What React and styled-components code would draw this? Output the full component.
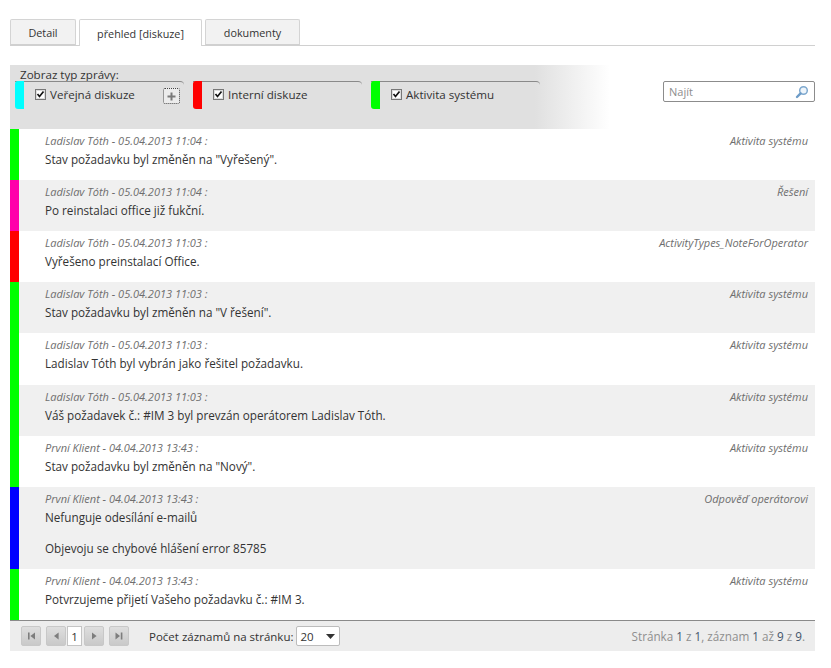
import React from 'react'
import styled, { createGlobalStyle } from 'styled-components'

const GlobalStyle = createGlobalStyle`
  html, body { margin: 0; padding: 0; background: #fff; }
  body { font-family: "Open Sans", "Noto Sans", "Liberation Sans", sans-serif; font-size: 11.5px; color: #333; }
`

const Page = styled.div`
  width: 805px;
  padding: 19px 16px 17px 10px;
`

const Tabs = styled.div`
  display: flex;
  gap: 3px;
  height: 26px;
  border-bottom: 1px solid #d0d0d0;
`

const Tab = styled.div`
  width: ${p => p.$w}px;
  box-sizing: border-box;
  height: ${p => (p.$active ? 27 : 26)}px;
  display: flex;
  align-items: center;
  justify-content: center;
  border: 1px solid #d4d4d4;
  border-bottom: ${p => (p.$active ? 'none' : '1px solid #d0d0d0')};
  border-radius: 2px 2px 0 0;
  background: ${p => (p.$active ? '#fff' : '#f2f2f2')};
  color: #333;
  font-size: 10.8px;
`

const Toolbar = styled.div`
  display: flex;
  justify-content: space-between;
  margin-top: 19px;
`

const FilterPanel = styled.div`
  width: 600px;
  height: 64px;
  box-sizing: border-box;
  padding: 3px 0 0 5px;
  background: linear-gradient(to right, #e0e0e0 0, #e0e0e0 525px, #ffffff 600px);
`

const FilterTitle = styled.div`
  padding-left: 5px;
  font-size: 11.6px;
  line-height: 13px;
  color: #333;
`

const FilterGroups = styled.div`
  display: flex;
  gap: 9px;
`

const FilterGroup = styled.div`
  width: 169px;
  height: 28px;
  box-sizing: border-box;
  display: flex;
  align-items: flex-start;
  border-top: 1px solid #8a8a8a;
  border-top-right-radius: 4px;
`

const ColorBar = styled.div`
  width: 9px;
  height: 28px;
  margin-top: -1px;
  margin-right: 11px;
  border-radius: 3px 0 0 3px;
  background: ${p => p.$color};
`

const CheckLabel = styled.label`
  display: flex;
  align-items: center;
  gap: 4px;
  margin-top: 5px;
  height: 14px;
  color: #333;
  font-size: 11.6px;
`

const CheckBox = styled.span`
  width: 11px;
  height: 11px;
  display: flex;
  align-items: center;
  justify-content: center;
  box-sizing: border-box;
  border: 1px solid #777;
  background: #fff;
  box-shadow: inset 0 0 0 1px #ddd;
`

const PlusButton = styled.span`
  width: 17px;
  height: 16px;
  margin: 6px 0 0 28px;
  box-sizing: border-box;
  display: flex;
  align-items: center;
  justify-content: center;
  border: 1px dotted #444;
  border-radius: 2px;
  background: #ececec;
  color: #777;
`

const SearchBox = styled.div`
  width: 152px;
  height: 21px;
  margin-top: 16px;
  box-sizing: border-box;
  display: flex;
  align-items: center;
  justify-content: space-between;
  padding: 0 5px;
  border: 1px solid #8c8c8c;
  border-radius: 2px;
  background: #fff;
  color: #8e8e8e;
  font-size: 11px;
`

const Row = styled.div`
  display: flex;
  height: ${p => p.$h}px;
  box-sizing: border-box;
  background: ${p => (p.$alt ? '#f0f0f0' : '#fff')};
`

const RowBar = styled.div`
  flex: 0 0 9px;
  background: ${p => p.$color};
`

const RowBody = styled.div`
  flex: 1;
  padding: 4px 7px 0 26px;
`

const RowHead = styled.div`
  display: flex;
  justify-content: space-between;
  font-style: italic;
  font-size: 11px;
  line-height: 15px;
  color: #6e6e6e;
`

const RowText = styled.p`
  margin: 3px 0 0;
  font-size: 11.7px;
  line-height: 16px;
  color: #333;
`

const RowTextNext = styled(RowText)`
  margin-top: 15px;
`

const Footer = styled.div`
  height: 31px;
  box-sizing: border-box;
  display: flex;
  align-items: center;
  justify-content: space-between;
  padding: 0 10px 0 11px;
  border-top: 1px solid #8a8a8a;
  background: #ededed;
`

const Pager = styled.div`
  display: flex;
  align-items: center;
`

const PageButton = styled.span`
  width: 20px;
  height: 20px;
  margin-right: ${p => p.$mr || 0}px;
  box-sizing: border-box;
  display: flex;
  align-items: center;
  justify-content: center;
  border: 1px solid #c8c8c8;
  border-radius: 2px;
  background: linear-gradient(#dedede, #c9c9c9);
`

const PageInput = styled.span`
  width: 15px;
  height: 20px;
  margin: 0 2px 0 1px;
  box-sizing: border-box;
  display: flex;
  align-items: center;
  justify-content: center;
  border: 1px solid #c4c4c4;
  background: #fff;
  color: #333;
  font-size: 11.5px;
`

const PageSizeLabel = styled.span`
  margin: 0 3px 0 20px;
  font-size: 11.5px;
  color: #333;
`

const PageSelect = styled.span`
  width: 44px;
  height: 20px;
  box-sizing: border-box;
  display: flex;
  align-items: center;
  justify-content: space-between;
  padding: 0 4px 0 3px;
  border: 1px solid #bcbcbc;
  border-radius: 2px;
  background: #fff;
  font-size: 11.5px;
  color: #333;
`

const PageInfo = styled.div`
  font-size: 11.7px;
  color: #8f8f8f;
`

const InfoNumber = styled.span`
  color: #44546a;
`

const Check = () => (
  <svg width="9" height="9" viewBox="0 0 9 9">
    <path d="M1.5 4 L3.5 6.5 L7.5 1.5" fill="none" stroke="#111" strokeWidth="1.7" />
  </svg>
)

const Plus = () => (
  <svg width="9" height="9" viewBox="0 0 9 9">
    <path d="M3.5 0.5h2v3h3v2h-3v3h-2v-3h-3v-2h3z" fill="#7a7a7a" />
  </svg>
)

const Magnifier = () => (
  <svg width="14" height="14" viewBox="0 0 14 14">
    <circle cx="8.5" cy="5.5" r="3.8" fill="#eef5fb" stroke="#7fa9cf" strokeWidth="1.5" />
    <path d="M5.6 8.4 L2 12" stroke="#6d9cc8" strokeWidth="2.4" strokeLinecap="round" />
  </svg>
)

const PagerIcon = ({ kind }) => {
  const paths = {
    first: 'M3 2.5h1.6v7H3z M10 2.5v7L5.4 6z',
    prev: 'M8.6 2.5v7L4 6z',
    next: 'M4 2.5v7L8.6 6z',
    last: 'M2.5 2.5v7L7 6z M7.8 2.5h1.6v7H7.8z',
  }
  return (
    <svg width="12" height="12" viewBox="0 0 12 12">
      <path d={paths[kind]} fill="#7d7d7d" />
    </svg>
  )
}

const filters = [
  { color: '#00ffff', label: 'Veřejná diskuze', plus: true },
  { color: '#ff0000', label: 'Interní diskuze' },
  { color: '#00ff00', label: 'Aktivita systému' },
]

const rows = [
  { color: '#00ff00', h: 51, who: 'Ladislav Tóth - 05.04.2013 11:04 :', type: 'Aktivita systému', text: ['Stav požadavku byl změněn na "Vyřešený".'] },
  { color: '#ff00aa', h: 51, alt: true, who: 'Ladislav Tóth - 05.04.2013 11:04 :', type: 'Řešení', text: ['Po reinstalaci office již fukční.'] },
  { color: '#ff0000', h: 51, who: 'Ladislav Tóth - 05.04.2013 11:03 :', type: 'ActivityTypes_NoteForOperator', text: ['Vyřešeno preinstalací Office.'] },
  { color: '#00ff00', h: 51, alt: true, who: 'Ladislav Tóth - 05.04.2013 11:03 :', type: 'Aktivita systému', text: ['Stav požadavku byl změněn na "V řešení".'] },
  { color: '#00ff00', h: 52, who: 'Ladislav Tóth - 05.04.2013 11:03 :', type: 'Aktivita systému', text: ['Ladislav Tóth byl vybrán jako řešitel požadavku.'] },
  { color: '#00ff00', h: 51, alt: true, who: 'Ladislav Tóth - 05.04.2013 11:03 :', type: 'Aktivita systému', text: ['Váš požadavek č.: #IM 3 byl prevzán operátorem Ladislav Tóth.'] },
  { color: '#00ff00', h: 51, who: 'První Klient - 04.04.2013 13:43 :', type: 'Aktivita systému', text: ['Stav požadavku byl změněn na "Nový".'] },
  { color: '#0000ff', h: 82, alt: true, who: 'První Klient - 04.04.2013 13:43 :', type: 'Odpověď operátorovi', text: ['Nefunguje odesílání e-mailů', 'Objevoju se chybové hlášení error 85785'] },
  { color: '#00ff00', h: 51, who: 'První Klient - 04.04.2013 13:43 :', type: 'Aktivita systému', text: ['Potvrzujeme přijetí Vašeho požadavku č.: #IM 3.'] },
]

const App = () => (
  <Page>
    <GlobalStyle />
    <Tabs>
      <Tab $w={66}>Detail</Tab>
      <Tab $w={123} $active>přehled [diskuze]</Tab>
      <Tab $w={95}>dokumenty</Tab>
    </Tabs>

    <Toolbar>
      <FilterPanel>
        <FilterTitle>Zobraz typ zprávy:</FilterTitle>
        <FilterGroups>
          {filters.map(f => (
            <FilterGroup key={f.label}>
              <ColorBar $color={f.color} />
              <CheckLabel>
                <CheckBox><Check /></CheckBox>
                {f.label}
              </CheckLabel>
              {f.plus && <PlusButton><Plus /></PlusButton>}
            </FilterGroup>
          ))}
        </FilterGroups>
      </FilterPanel>
      <SearchBox>
        Najít
        <Magnifier />
      </SearchBox>
    </Toolbar>

    {rows.map((r, i) => (
      <Row key={i} $h={r.h} $alt={r.alt}>
        <RowBar $color={r.color} />
        <RowBody>
          <RowHead>
            <span>{r.who}</span>
            <span>{r.type}</span>
          </RowHead>
          <RowText>{r.text[0]}</RowText>
          {r.text[1] && <RowTextNext>{r.text[1]}</RowTextNext>}
        </RowBody>
      </Row>
    ))}

    <Footer>
      <Pager>
        <PageButton $mr={5}><PagerIcon kind="first" /></PageButton>
        <PageButton><PagerIcon kind="prev" /></PageButton>
        <PageInput>1</PageInput>
        <PageButton $mr={5}><PagerIcon kind="next" /></PageButton>
        <PageButton><PagerIcon kind="last" /></PageButton>
        <PageSizeLabel>Počet záznamů na stránku:</PageSizeLabel>
        <PageSelect>
          20
          <svg width="9" height="5" viewBox="0 0 9 5"><path d="M0 0h9L4.5 5z" fill="#333" /></svg>
        </PageSelect>
      </Pager>
      <PageInfo>
        Stránka <InfoNumber>1</InfoNumber> z <InfoNumber>1</InfoNumber>, záznam <InfoNumber>1</InfoNumber> až <InfoNumber>9</InfoNumber> z <InfoNumber>9</InfoNumber>.
      </PageInfo>
    </Footer>
  </Page>
)

export default App
